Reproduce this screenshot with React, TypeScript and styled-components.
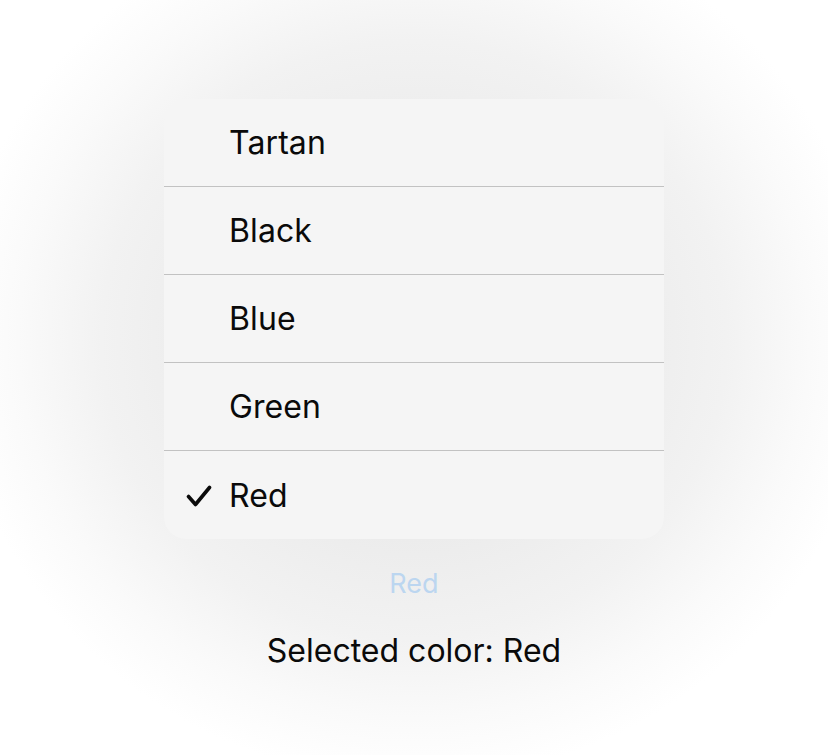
import styled, { createGlobalStyle } from "styled-components";

const GlobalStyle = createGlobalStyle`
  html, body {
    margin: 0;
    padding: 0;
    background: #ffffff;
  }
  body {
    font-family: Inter, "Noto Sans", "Liberation Sans", sans-serif;
    -webkit-font-smoothing: antialiased;
  }
`;

const Page = styled.div`
  width: 828px;
  height: 755px;
  box-sizing: border-box;
  padding-top: 99px;
  display: flex;
  flex-direction: column;
  align-items: center;
  background: radial-gradient(
    ellipse 460px 440px at 50% 45%,
    #eaeaea 0%,
    #ececec 45%,
    #f2f2f2 68%,
    #fafafa 86%,
    #ffffff 100%
  );
`;

const Menu = styled.ul`
  width: 500px;
  margin: 0;
  padding: 0;
  list-style: none;
  background: #f5f5f5;
  border-radius: 22px;
  overflow: hidden;
`;

const Item = styled.li<{ $last?: boolean }>`
  height: 88px;
  box-sizing: border-box;
  display: flex;
  align-items: center;
  padding-left: 22px;
  border-bottom: ${(p) => (p.$last ? "none" : "1px solid #c2c2c2")};
  font-size: 32px;
  color: #0a0a0a;
  letter-spacing: 0.1px;
`;

const Check = styled.span`
  width: 43px;
  display: flex;
  align-items: center;
  padding-top: 2px;
`;

const Picked = styled.div`
  margin-top: 28px;
  font-size: 27px;
  color: #bcd6f0;
`;

const Summary = styled.div`
  margin-top: 31px;
  font-size: 32px;
  color: #0a0a0a;
`;

const colors = ["Tartan", "Black", "Blue", "Green", "Red"];

function CheckMark() {
  return (
    <svg width="26" height="22" viewBox="0 0 26 22">
      <path
        d="M2.5 11.5 L9.5 19.5 L23.5 2.5"
        fill="none"
        stroke="#0a0a0a"
        strokeWidth="3.6"
        strokeLinecap="round"
        strokeLinejoin="round"
      />
    </svg>
  );
}

export default function App() {
  const selected = "Red";
  return (
    <>
      <GlobalStyle />
      <Page>
        <Menu>
          {colors.map((c, i) => (
            <Item key={c} $last={i === colors.length - 1}>
              <Check>{c === selected && <CheckMark />}</Check>
              {c}
            </Item>
          ))}
        </Menu>
        <Picked>{selected}</Picked>
        <Summary>Selected color: {selected}</Summary>
      </Page>
    </>
  );
}
